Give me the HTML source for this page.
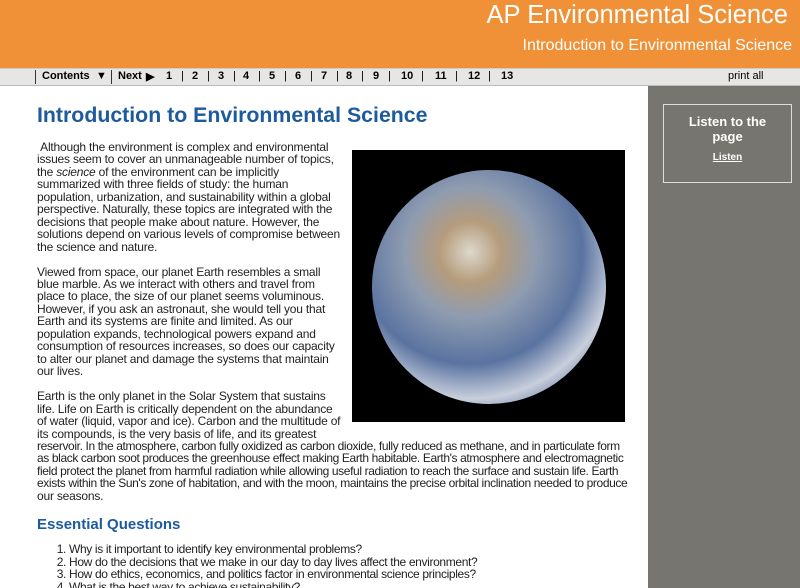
<!DOCTYPE html>
<html><head><style>
*{margin:0;padding:0}
html,body{width:800px;height:588px;overflow:hidden}
body{background:#fff;font-family:"Liberation Sans",Arial,sans-serif;position:relative}
#hdr{position:absolute;left:0;top:0;width:800px;height:68px;background:#f09138;color:#fff}
#hdr .t1{position:absolute;right:12px;top:1px;font-size:25.5px}
#hdr .t2{position:absolute;right:8px;top:37px;font-size:16px}
#nav{position:absolute;left:0;top:68px;width:800px;height:18px;background:#e6e6e4;border-top:1px solid #ccc;border-bottom:1px solid #bbb;box-sizing:border-box;font-size:11px;color:#000;font-weight:bold}
#nav span{position:absolute;top:1px}
#nav .s{font-weight:normal}
#side{position:absolute;left:648px;top:86px;width:152px;height:502px;background:#767570}
#box{position:absolute;left:663px;top:104px;width:127px;height:77px;border:1px solid #ddd;color:#fff;text-align:center;font-weight:bold}
#main{position:absolute;left:37px;top:103px;width:600px;font-size:12px;line-height:12.45px;color:#222;letter-spacing:-0.2px;white-space:nowrap}
h1{color:#1d5b9c;font-size:21.3px;margin-bottom:14px;line-height:24px;letter-spacing:0}
h2{color:#1d5b9c;font-size:15px;margin:14px 0 9px;line-height:18px;letter-spacing:0}
p{margin-bottom:12.5px}
#earth{position:absolute;left:315px;top:47px;width:273px;height:272px;background:#000;overflow:hidden}
#earth div{position:absolute;left:20px;top:20px;width:234px;height:234px;border-radius:50%;background:radial-gradient(circle at 42% 35%,#ddd8cc 0,#b59c7c 15%,#8f9cb0 32%,#5a73a0 55%,#c8cfdc 72%,#6c7ea4 85%,#1f2a46 100%)}
.w{letter-spacing:-0.38px}
ol{margin-left:32px;letter-spacing:-0.35px}
</style></head><body>
<div id="hdr"><div class="t1">AP Environmental Science</div><div class="t2">Introduction to Environmental Science</div></div>
<div id="nav">
<span style="left:35px;border-left:1px solid #333;height:14px;top:1px"></span>
<span style="left:42px">Contents</span><span style="left:96px">▼</span>
<span style="left:111px;border-left:1px solid #333;height:14px;top:1px"></span>
<span style="left:118px">Next</span><span style="left:146px">▶</span>
<span style="left:166px">1</span><span class="s" style="left:181px">|</span>
<span style="left:192px">2</span><span class="s" style="left:207px">|</span>
<span style="left:218px">3</span><span class="s" style="left:233px">|</span>
<span style="left:243px">4</span><span class="s" style="left:258px">|</span>
<span style="left:269px">5</span><span class="s" style="left:284px">|</span>
<span style="left:295px">6</span><span class="s" style="left:310px">|</span>
<span style="left:321px">7</span><span class="s" style="left:336px">|</span>
<span style="left:346px">8</span><span class="s" style="left:361px">|</span>
<span style="left:373px">9</span><span class="s" style="left:388px">|</span>
<span style="left:401px">10</span><span class="s" style="left:421px">|</span>
<span style="left:435px">11</span><span class="s" style="left:455px">|</span>
<span style="left:468px">12</span><span class="s" style="left:488px">|</span>
<span style="left:501px">13</span>
<span class="s" style="left:728px">print all</span>
</div>
<div id="side"></div>
<div id="box"><div style="margin-top:9px;font-size:13px;line-height:15px">Listen to the<br>page</div><div style="margin-top:8px;font-size:10px;text-decoration:underline">Listen</div></div>
<div id="main">
<h1>Introduction to Environmental Science</h1>
<div id="earth"><div></div></div>
<p>&nbsp;Although the environment is complex and environmental<br>issues seem to cover an unmanageable number of topics,<br>the <i>science</i> of the environment can be implicitly<br>summarized with three fields of study: the human<br>population, urbanization, and sustainability within a global<br>perspective. Naturally, these topics are integrated with the<br>decisions that people make about nature. However, the<br>solutions depend on various levels of compromise between<br>the science and nature.</p>
<p>Viewed from space, our planet Earth resembles a small<br>blue marble. As we interact with others and travel from<br>place to place, the size of our planet seems voluminous.<br>However, if you ask an astronaut, she would tell you that<br>Earth and its systems are finite and limited. As our<br>population expands, technological powers expand and<br>consumption of resources increases, so does our capacity<br>to alter our planet and damage the systems that maintain<br>our lives.</p>
<p>Earth is the only planet in the Solar System that sustains<br>life. Life on Earth is critically dependent on the abundance<br>of water (liquid, vapor and ice). Carbon and the multitude of<br>its compounds, is the very basis of life, and its greatest<br><span class="w">reservoir. In the atmosphere, carbon fully oxidized as carbon dioxide, fully reduced as methane, and in particulate form</span><br><span class="w">as black carbon soot produces the greenhouse effect making Earth habitable. Earth's atmosphere and electromagnetic</span><br><span class="w">field protect the planet from harmful radiation while allowing useful radiation to reach the surface and sustain life. Earth</span><br><span class="w">exists within the Sun's zone of habitation, and with the moon, maintains the precise orbital inclination needed to produce</span><br>our seasons.</p>
<h2>Essential Questions</h2>
<ol>
<li>Why is it important to identify key environmental problems?</li>
<li>How do the decisions that we make in our day to day lives affect the environment?</li>
<li>How do ethics, economics, and politics factor in environmental science principles?</li>
<li>What is the best way to achieve sustainability?</li>
</ol>
</div>
</body></html>
